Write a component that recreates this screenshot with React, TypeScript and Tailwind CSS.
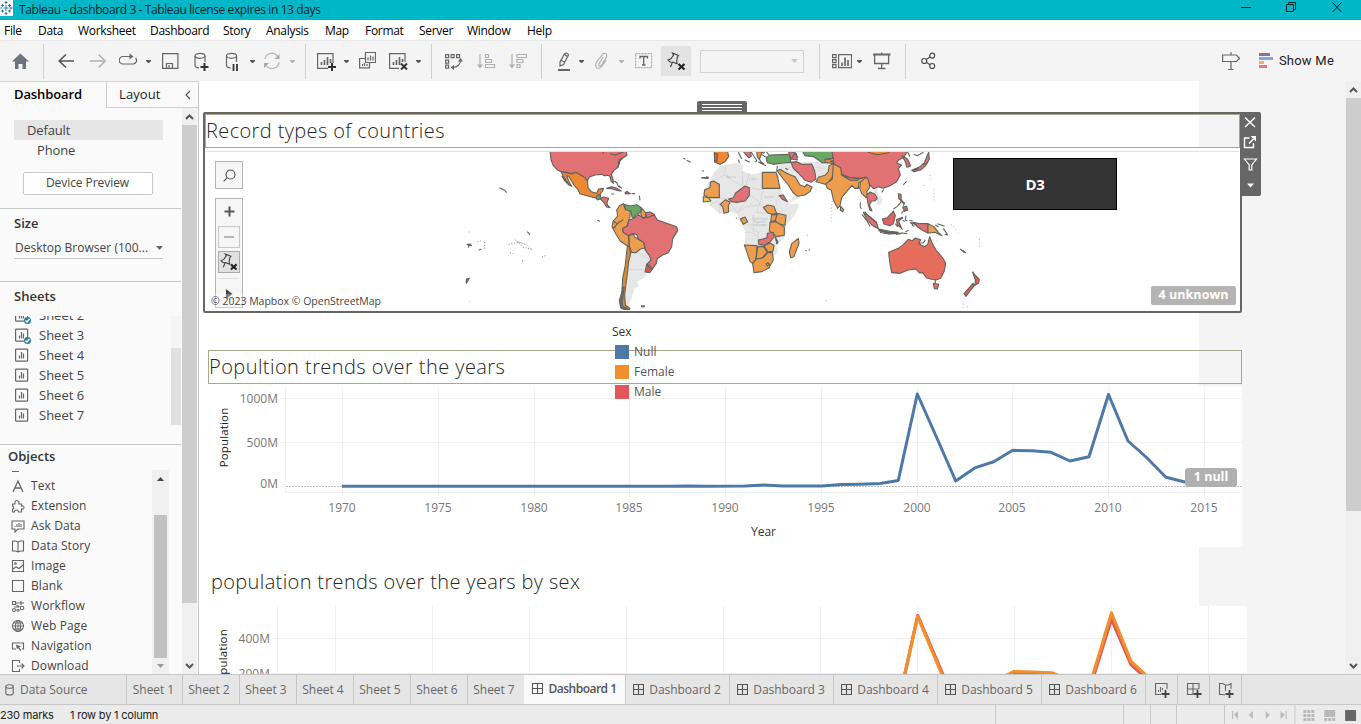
import React from "react";

const SANS = "font-['Open_Sans','Noto_Sans',sans-serif]";

function Caret({ className = "", light = false }: { className?: string; light?: boolean }) {
  return (
    <svg className={`h-5 w-[5px] shrink-0 ${className}`} viewBox="0 0 5 20">
      <path d="M0 9h5v1l-2 2H2L0 10z" fill={light ? "#b4b4b4" : "#5c5c5c"} />
    </svg>
  );
}

function Sep({ className = "" }: { className?: string }) {
  return <div className={`h-[35px] w-px shrink-0 bg-[#cfcfcf] ${className}`} />;
}

function Ico({ className, box, children }: { className: string; box: string; children: React.ReactNode }) {
  return (
    <svg className={`h-5 shrink-0 ${className}`} viewBox={box} fill="none" stroke="#666" strokeWidth="1.2">
      {children}
    </svg>
  );
}

function Pin({ className }: { className: string }) {
  return (
    <svg className={`shrink-0 ${className}`} viewBox="0 0 19 19" fill="none" stroke="#3c3c3c" strokeWidth="1.1">
      <path d="M5.500 1l6 2.500-1 1.200-.800 4 .300 3-3.800-1.500L3 10 1 8l3-1.200L6.500 3z" />
      <path d="M5.500 10L3.500 15" />
      <path d="M11.500 12l6 5.500M17.500 12l-6 5.500" stroke="#222" strokeWidth="2.200" />
    </svg>
  );
}

function TitleBar() {
  return (
    <header className={`flex h-5 shrink-0 items-start overflow-hidden bg-[#00b7c7] ${SANS}`}>
      <svg className="h-4 w-[13px] bg-white" viewBox="0 0 13 16" stroke="#2f78b0" fill="none">
        <path d="M6 5v6M3.500 8h5M6 1v3M4.500 2.500h3M6 12v3M4.500 13.500h3M0 8h2M11 6.500v3M9.500 8h3M2.500 4v3M1 5.500h3M9.500 4v3M8 5.500h3M2.500 9.500v3M1 11h3M9.500 9.500v3M8 11h3" />
      </svg>
      <span className="ml-[6px] mt-px text-[12px] leading-[17px] tracking-[-0.39px] text-[#08262a]">
        Tableau - dashboard 3 - Tableau license expires in 13 days
      </span>
      <svg className="ml-auto mr-[14px] h-5 w-[106px]" viewBox="0 0 106 20" fill="none" stroke="#062327">
        <path d="M0 7.500h10" />
        <path d="M45.500 4.500h7v7h-7zM47.500 4v-1.500h7v7H53" />
        <path d="M91.500 2.500l9 9.500M100.500 2.500l-9 9.500" />
      </svg>
    </header>
  );
}

function MenuBar() {
  return (
    <nav className={`flex h-5 shrink-0 items-center bg-white pl-1 pt-[2px] text-[12px] tracking-[-0.3px] text-black ${SANS}`}>
      <span className="w-[34px]">File</span>
      <span className="w-[40px]">Data</span>
      <span className="w-[72px]">Worksheet</span>
      <span className="w-[73px]">Dashboard</span>
      <span className="w-[43px]">Story</span>
      <span className="w-[59px]">Analysis</span>
      <span className="w-[40px]">Map</span>
      <span className="w-[54px]">Format</span>
      <span className="w-[48px]">Server</span>
      <span className="w-[60px]">Window</span>
      <span>Help</span>
    </nav>
  );
}

function Toolbar() {
  return (
    <div className="flex h-[41px] shrink-0 items-center border-t border-[#e9e9e9] bg-[#f4f4f4]">
      <Ico className="ml-[12px] w-[17px]" box="0 0 17 20">
        <path d="M8.300 2.500L17 10.500h-3v7.500h-3.500v-5h-4v5H3v-7.500H0z" fill="#6b7280" stroke="none" />
      </Ico>
      <Sep className="ml-[14px]" />
      <Ico className="ml-[14px] w-[17px]" box="0 0 17 20">
        <path d="M16 10H1M8 3.500L1.200 10 8 16.500" strokeWidth="1.600" stroke="#555" />
      </Ico>
      <Ico className="ml-[15px] w-[17px]" box="0 0 17 20">
        <path d="M0 10h15M8.500 3.500L15.200 10l-6.700 6.500" strokeWidth="1.500" stroke="#b0b0b0" />
      </Ico>
      <Ico className="ml-[12px] w-[19px]" box="0 0 19 20">
        <path d="M12 5.500H4a3.500 3.500 0 0 0 0 7.500h10a3.500 3.500 0 0 0 2.500-6" />
        <path d="M10.500 2.500l4 3-4 3z" fill="#666" stroke="none" />
      </Ico>
      <Caret className="ml-[8px]" />
      <Ico className="ml-[11px] w-[17px]" box="0 0 17 20">
        <path d="M.600 2.600h15.300v14.800H.600zM4.500 17v-4.500h6V17M7 14v3" />
      </Ico>
      <Ico className="ml-[15px] w-[16px]" box="0 0 16 20">
        <ellipse cx="6" cy="4.800" rx="5" ry="2.500" />
        <path d="M1 5v9.500q0 2 4 2.500M11 5v6" />
        <path d="M10.500 12v8M6.500 16h8" stroke="#333" strokeWidth="2" />
      </Ico>
      <Ico className="ml-[15px] w-[15px]" box="0 0 15 20">
        <ellipse cx="6.500" cy="4.800" rx="5" ry="2.500" />
        <path d="M1.500 5v9.500q0 2 4 2.500M11.500 5v6" />
        <path d="M8.500 13v7M12 13v7" stroke="#333" strokeWidth="1.800" />
      </Ico>
      <Caret className="ml-[10px]" />
      <Ico className="ml-[8px] w-[18px]" box="0 0 18 20">
        <path d="M2 8a7 7 0 0 1 13-2M16 11a7 7 0 0 1-13 3" stroke="#b4b4b4" />
        <path d="M16.500 3v5h-5zM1 17v-5h5z" fill="#a9a9a9" stroke="none" />
      </Ico>
      <Caret className="ml-[9px]" light />
      <Sep className="ml-[10px]" />
      <Ico className="ml-[11px] w-[19px]" box="0 0 19 20">
        <path d="M16 12V2.600H.600v14.800H11" />
        <path d="M4.500 14v-3M7.500 14V9M10.500 14V6M13.500 12V8" strokeWidth="1.700" />
        <path d="M15 12v8M11 16h8" stroke="#333" strokeWidth="2" />
      </Ico>
      <Caret className="ml-[8px]" />
      <Ico className="ml-[10px] w-[17px]" box="0 0 17 20">
        <path d="M6.500 1.500h10v10h-10zM6 7.500H.600v9.300h9.900V12M9 9.500v-3M11.500 9.500v-5M14 9.500v-4M3.500 15v-2M5.500 15v-3M8 15v-2" />
      </Ico>
      <Ico className="ml-[13px] w-[19px]" box="0 0 19 20">
        <path d="M16 11V2.600H.600v14.800H10" />
        <path d="M4.500 14v-3M7.500 14V9M10.500 14V6M13.500 11V8" strokeWidth="1.700" />
        <path d="M12 12.500l6 6M18 12.500l-6 6" stroke="#333" strokeWidth="1.900" />
      </Ico>
      <Caret className="ml-[8px]" />
      <Sep className="ml-[10px]" />
      <Ico className="ml-[13px] w-[18px]" box="0 0 18 20">
        <path d="M.600 3.600h3v3h-3zM6.100 3.600h3v3h-3zM11.600 3.600h3v3h-3zM.600 9.100h3v3h-3zM.600 14.100h3v3h-3zM15.500 9q0 7-8.500 7.500" />
        <path d="M15.500 7l2.500 3.500h-5zM5.500 16.500l3.500-2.500v5z" fill="#666" stroke="none" />
      </Ico>
      <Ico className="ml-[14px] w-[19px]" box="0 0 19 20">
        <path d="M3 3v12M8.500 3.500h3v3h-3zM8.500 8.500h6v3h-6zM8.500 13.500h9v3h-9z" stroke="#b0b0b0" />
        <path d="M0 13.500h6l-3 4z" fill="#b0b0b0" stroke="none" />
      </Ico>
      <Ico className="ml-[13px] w-[19px]" box="0 0 19 20">
        <path d="M3 3v12M8 3.500h9.500v3H8zM8 8.500h6v3H8zM8 13.500h3v3H8z" stroke="#b0b0b0" />
        <path d="M0 13.500h6l-3 4z" fill="#b0b0b0" stroke="none" />
      </Ico>
      <Sep className="ml-[13px]" />
      <Ico className="ml-[15px] w-[15px]" box="0 0 15 20">
        <path d="M7.500 3q3-2 4 1l-5 9.500-3.500 1.500v-4zM4.500 9.500L8 11.500M7.500 3.500l3 2" />
        <path d="M1 19h12" strokeWidth="2" />
      </Ico>
      <Caret className="ml-[7px]" />
      <Ico className="ml-[11px] w-[14px]" box="0 0 14 20">
        <path d="M8 6l-4 7q-.500 3 2 2l5-8q2-4-1-4.500-2-.500-3 1.500L1.500 11q-2 4 .500 6 3 1 5-2l4-6" stroke="#b0b0b0" />
      </Ico>
      <Caret className="ml-[10px]" light />
      <Ico className="ml-[11px] w-[18px]" box="0 0 18 20">
        <path d="M.600 2.600h16v14h-16z" stroke="#aaa" strokeDasharray="2 1" />
        <path d="M5 7.500V5.500h7.500v2M8.700 5.500v8.500M7 14h3.500" strokeWidth="1.300" />
      </Ico>
      <div className="ml-[8px] flex h-[30px] w-[30px] items-center justify-center bg-[#e3e3e3]">
        <Pin className="h-[19px] w-[19px]" />
      </div>
      <div className="ml-[9px] flex h-[23px] w-[104px] items-center justify-end rounded-[1px] border border-[#d2d2d2] pr-[5px]">
        <svg className="h-[5px] w-[7px]" viewBox="0 0 7 5"><path d="M0 0h7L3.500 4z" fill="#c8c8c8" /></svg>
      </div>
      <Sep className="ml-[15px]" />
      <Ico className="ml-[12px] w-[20px]" box="0 0 20 20">
        <path d="M.600 3.600h3.500v3H.600zM.600 8.600h3.500v3H.600zM.600 13.600h3.500v3H.600zM6.600 3.600h12.900v13H6.600z" />
        <path d="M10 15v-3.500M13 15V6.500M16 15V9" strokeWidth="1.700" />
      </Ico>
      <Caret className="ml-[5px]" />
      <Ico className="ml-[11px] w-[18px]" box="0 0 18 20">
        <path d="M0 3.500h17.500" strokeWidth="2" />
        <path d="M1.600 4v8.500h14V4M8.700 12.500V17M5 17.500h7.500M8.700 1.500V3" strokeWidth="1.300" />
      </Ico>
      <Sep className="ml-[14px]" />
      <Ico className="ml-[15px] w-[15px]" box="0 0 15 20">
        <g stroke="#4a4a4a">
          <circle cx="3.200" cy="10" r="2.500" /><circle cx="11.200" cy="4.600" r="2.500" /><circle cx="11.200" cy="15" r="2.500" />
          <path d="M5.300 8.500L9 6M5.300 11.300L9 13.700" />
        </g>
      </Ico>
      <Ico className="ml-auto w-[18px]" box="0 0 18 20">
        <path d="M9 1v3M.600 4H14.500l3 3.300-3 3.200H.600zM9 10.500V19M6 18.500h5.500" />
      </Ico>
      <svg className="ml-[19px] h-5 w-[14px] shrink-0" viewBox="0 0 14 20">
        <path d="M0 2h11v3H0z" fill="#8a6f9c" /><path d="M0 6h14v3H0z" fill="#81a8d0" />
        <path d="M0 10h5v3H0z" fill="#f6ac7f" /><path d="M0 14h8v3H0z" fill="#fd6f80" />
      </svg>
      <span className="ml-[6px] mr-[27px] whitespace-nowrap font-[Roboto,sans-serif] text-[13px] tracking-[0.22px] text-[#222]">Show Me</span>
    </div>
  );
}

function SheetRow({ name, used = false }: { name: string; used?: boolean }) {
  return (
    <div className="flex h-5 shrink-0 items-center">
      <svg className="h-4 w-[18px]" viewBox="0 0 18 16" fill="none" stroke="#666" strokeWidth="1.200">
        <rect x=".600" y="1.100" width="12" height="12" rx=".500" />
        <path d="M4.500 10.500V7.500M6.500 10.500V4M8.500 10.500V5.500" />
        {used && <><circle cx="12.500" cy="12.500" r="3.500" fill="#347c9e" stroke="none" /><path d="M10.500 12.500l1.500 1.500 2.500-3" stroke="#fff" /></>}
      </svg>
      <span className="ml-[6px]">{name}</span>
    </div>
  );
}

const objects: { name: string; icon: React.ReactNode }[] = [
  { name: "Text", icon: <path d="M2 13L7 2l5 11M3.800 9h6.400" strokeWidth="1.300" /> },
  { name: "Extension", icon: <path d="M4 5V3q1-3 4 0v2h2.500v2q2.500-.500 2.500 1.500t-2.500 1.500v3H7.500q0-2-2-2t-2 2H1.500v-3q2.500-.500 0-3V5z" /> },
  { name: "Ask Data", icon: <><path d="M1 2h12v8H7l-3 3v-3H1z" /><path d="M4 8V7M6 8V5M8 8V4M10 8V5" strokeWidth="1.600" stroke="#999" /></> },
  { name: "Data Story", icon: <path d="M7 3L4.500 2H1.500v10h3L7 13l2.500-1h3V2h-3L7 3v10" /> },
  { name: "Image", icon: <><path d="M1.500 1.500h11v11h-11zM2 10l3-2 3 1.500L12 6" /><circle cx="4.500" cy="4.500" r=".800" /></> },
  { name: "Blank", icon: <path d="M1.500 1.500h11v11h-11z" /> },
  { name: "Workflow", icon: <><path d="M1.500 2.500h3v3h-3zM4.500 4H13M10 2v4M3 8h5M5.500 6l3 2M5 11h4" /><circle cx="3" cy="11" r="1.500" /><circle cx="11" cy="9" r="1.800" /><path d="M7 10v3" /></> },
  { name: "Web Page", icon: <><circle cx="7" cy="7" r="5.500" /><ellipse cx="7" cy="7" rx="2.500" ry="5.500" /><path d="M1.500 7h11M2.500 4h9M2.500 10h9M7 1.500v11" strokeWidth=".900" /></> },
  { name: "Navigation", icon: <><path d="M5 10H1.500V4h11v6H11" /><path d="M5 5.500l5 2-2 .800 2.500 3-1 .700-2.500-3-1 1.500z" fill="#666" stroke="none" /></> },
  { name: "Download", icon: <path d="M8.500 4V1.500h-7v11h7V10M6 7h7M10.500 4.500L13 7l-2.500 2.500" /> },
];

function Sidebar() {
  return (
    <aside className={`flex w-[199px] shrink-0 flex-col border-r border-[#c8c8c8] bg-[#fafafa] text-[13px] text-[#444] ${SANS}`}>
      <div className="flex h-[27px] shrink-0 border-t border-[#d2d2d2]">
        <div className="w-[106px] pl-[14px] text-[13px] font-semibold leading-[25px] tracking-[-0.1px] text-black">Dashboard</div>
        <div className="flex flex-1 items-center border-b border-l border-[#cfcfcf] pl-[12px] text-[13px] tracking-[0.1px] text-[#222]">
          Layout
          <svg className="ml-auto mr-[7px] h-[10px] w-[6px]" viewBox="0 0 6 10" fill="none" stroke="#555" strokeWidth="1.200"><path d="M5 1L1 5l4 4" /></svg>
        </div>
      </div>
      <div className="flex min-h-0 flex-1">
        <div className="flex w-[181px] shrink-0 flex-col overflow-hidden">
          <div className="ml-[14px] mt-[12px] h-5 w-[149px] shrink-0 bg-[#e6e6e6] pl-[13px] leading-5 tracking-[-0.15px]">Default</div>
          <div className="ml-[37px] h-5 shrink-0 leading-5 tracking-[-0.15px]">Phone</div>
          <div className="ml-[23px] mt-[12px] h-[23px] w-[130px] shrink-0 rounded-[2px] border border-[#c8c8c8] bg-white pr-px text-center text-[12px] leading-[20px] tracking-[-0.06px]">Device Preview</div>
          <div className="mt-[13px] h-[73px] shrink-0 border-t border-[#c8c8c8] pl-[14px] pt-[5px]">
            <div className="text-[13px] font-semibold leading-[18px] text-[#333]">Size</div>
            <div className="mt-[5px] flex h-[22px] w-[149px] items-center border-b border-[#c8c8c8] pl-px text-[12px] tracking-[0.02px]">
              Desktop Browser (100...
              <svg className="ml-auto h-[4px] w-[7px]" viewBox="0 0 7 4"><path d="M0 0h7L3.500 4z" fill="#666" /></svg>
            </div>
          </div>
          <div className="h-[163px] shrink-0 border-t border-[#c8c8c8]">
            <div className="pl-[14px] pt-[4px] text-[13px] font-semibold leading-[20px] text-[#333]">Sheets</div>
            <div className="mt-[10px] flex h-[109px] overflow-hidden">
              <div className="-mt-[10px] flex flex-1 flex-col pl-[15px]">
                <SheetRow name="Sheet 2" used />
                <SheetRow name="Sheet 3" used />
                <SheetRow name="Sheet 4" />
                <SheetRow name="Sheet 5" />
                <SheetRow name="Sheet 6" />
                <SheetRow name="Sheet 7" />
              </div>
              <div className="w-[10px] bg-[#f5f5f5] pt-[32px]"><div className="h-[77px] bg-[#e1e1e1]" /></div>
            </div>
          </div>
          <div className="flex min-h-0 flex-1 flex-col border-t border-[#c8c8c8]">
            <div className="h-[25px] shrink-0 pl-[8px] pt-px text-[13px] font-semibold leading-[20px] text-[#333]">Objects</div>
            <div className="flex min-h-0 flex-1">
              <div className="flex w-[152px] flex-col overflow-hidden pl-[11px]">
                <div className="mb-[4px] ml-px h-[2px] w-[7px] shrink-0 border-b border-[#666]" />
                {objects.map((o) => (
                  <div key={o.name} className="flex h-5 shrink-0 items-center text-[12px] tracking-[0.1px]">
                    <svg className="h-[14px] w-[14px]" viewBox="0 0 14 14" fill="none" stroke="#666" strokeWidth="1.100">{o.icon}</svg>
                    <span className="ml-[6px] whitespace-nowrap">{o.name}</span>
                  </div>
                ))}
              </div>
              <div className="flex w-[17px] flex-col items-center bg-[#f0f0f0]">
                <svg className="mt-[7px] h-[4px] w-[7px]" viewBox="0 0 7 4"><path d="M0 4h7L3.500 0z" fill="#444" /></svg>
                <div className="mt-[34px] h-[143px] w-[13px] bg-[#c1c1c1]" />
                <svg className="mt-[6px] h-[4px] w-[7px]" viewBox="0 0 7 4"><path d="M0 0h7L3.500 4z" fill="#999" /></svg>
              </div>
            </div>
          </div>
        </div>
        <div className="ml-px flex w-[15px] flex-col items-center bg-[#f0f0f0]">
          <svg className="mt-[6px] h-[6px] w-[9px] shrink-0" viewBox="0 0 9 6" fill="none" stroke="#555" strokeWidth="2"><path d="M1 5l3.500-3.500L8 5" /></svg>
          <div className="mt-[5px] h-[478px] w-full shrink-0 bg-[#cdcdcd]" />
          <svg className="mt-[60px] h-[6px] w-[9px] shrink-0" viewBox="0 0 9 6" fill="none" stroke="#555" strokeWidth="2"><path d="M1 1l3.500 3.500L8 1" /></svg>
        </div>
      </div>
    </aside>
  );
}

const RED = "#e27173";
const ORANGE = "#ee9d4d";
const DEEP = "#ee8833";
const GREEN = "#69a864";
const LAND = "#e7e7e7";
const YELLOW = "#ecc653";

const americas: [string, string][] = [
  [RED, "M300 15L303 45 310 62 322 75 335 80 350 82 365 86 378 82 395 92 404 98 412 108 418 96 435 90 455 88 463 92 472 91 480 94 483 108 490 115 489 102 484 88 492 76 505 66 508 50 520 38 531 31 528 15z"],
  [DEEP, "M333 80L350 84 365 87 378 82 395 92 404 98 413 109 414 128 424 140 440 145 446 132 461 130 456 141 448 150 438 158 428 157 410 152 390 146 384 134 372 120 356 94 350 92 358 112 365 124 356 119 340 93z"],
  [GREEN, "M438 158L443 150 452 149 450 162 442 165z"],
  [RED, "M450 161L460 156 476 160 471 172 472 180 480 188 470 186 462 173z"],
  [RED, "M470 130L484 125 497 128 514 138 500 136 485 131z"],
  [RED, "M525 144L530 139 541 146 528 147z"],
  [ORANGE, "M520 176L509 182 500 195 503 213 490 228 486 245 498 268 511 289 532 302 538 305 535 272 520 262 518 252 530 244 540 217 541 198 525 190z"],
  [GREEN, "M522 178L540 183 560 179 575 189 570 203 557 208 553 220 546 216 543 199 527 194z"],
  [ORANGE, "M575 190L587 203 586 217 578 218 572 206z"],
  [RED, "M587 203L600 201 612 208 606 216 590 218z"],
  [RED, "M552 220L565 208 580 220 600 216 612 208 622 225 650 235 680 245 683 257 668 281 665 305 655 323 638 330 622 341 619 355 606 374 600 362 590 358 603 345 598 332 585 314 583 295 565 282 560 268 545 266 535 272 520 262 518 250 532 243 536 226z"],
  [ORANGE, "M537 272L550 268 554 276 580 292 585 309 571 312 558 323 545 322 538 303z"],
  ["#d5554f", "M590 358L606 373 599 383 585 381z"],
  ["#dc8a32", "M532 303L538 305 542 326 536 350 533 378 529 410 524 450 526 480 540 490 538 494 523 494 512 488 508 466 516 440 518 400 526 360z"],
  ["#e05a44", "M49 402L58 400 49 415z"],
];

const oldWorld: [string, string][] = [
  [DEEP, "M73 15L74 51 90 58 105 50 116 35 112 15z"],
  ["#de604f", "M73 24L82 27 81 50 74 51z"],
  [RED, "M160 20L180 18 184 34 176 38z"],
  [RED, "M200 15L226 15 222 24 208 22z"],
  [DEEP, "M200 18L216 22 208 44 202 36z"],
  [GREEN, "M228 38L240 30 300 28 302 52 278 54 250 58 232 53z"],
  [RED, "M295 18L318 25 322 45 303 42z"],
  [ORANGE, "M262 78L270 73 290 85 315 95 330 120 345 125 350 118 366 126 360 140 345 150 322 154 308 141 295 120 275 96z"],
  [ORANGE, "M217 82L258 82 263 96 270 130 217 130z"],
  [RED, "M303 52L320 50 335 58 365 57 374 78 378 102 363 112 345 106 325 84 310 70z"],
  [GREEN, "M335 15L430 15 428 40 410 42 415 52 398 54 370 35 345 32z"],
  [DEEP, "M405 42L428 45 431 56 405 52z"],
  [RED, "M425 15L654 15 642 36 625 46 620 53 635 61 625 70 631 90 620 110 600 122 580 130 565 125 550 131 540 120 530 98 510 100 480 98 455 88 450 70 432 56 430 40z"],
  [DEEP, "M520 15L600 15 596 23 563 29 545 25z"],
  [ORANGE, "M378 110L386 96 405 91 415 80 417 62 430 56 441 70 424 100 410 119 385 112z"],
  [ORANGE, "M430 56L452 68 455 90 480 105 510 101 528 96 533 100 523 114 507 111 505 130 494 130 486 121 470 140 455 158 450 182 443 190 430 165 424 136 412 130 407 117 427 102z"],
  [RED, "M455 89L482 98 508 101 502 106 480 105z"],
  [ORANGE, "M452 184L461 194 458 200 451 196z"],
  [ORANGE, "M511 112L527 97 534 102 540 126 530 140 535 154 528 158 515 145 509 130z"],
  [RED, "M530 150L541 141 555 148 562 160 554 168 545 168 538 180 546 198 540 196 534 176z"],
  [RED, "M636 32L653 43 662 62 651 67 646 50z"],
  [RED, "M665 76L690 65 703 53 710 36 716 22 718 43 707 62 694 74 672 80z"],
  [RED, "M520 202L540 215 560 234 565 251 545 240 530 222z"],
  [RED, "M565 252L600 259 625 262 600 264 574 258z"],
  ["#e06068", "M577 222L592 218 610 198 616 212 610 236 600 242 582 237z"],
  [RED, "M619 224L638 217 626 229 634 248 622 240z"],
  [RED, "M625 146L633 148 634 168 626 160z"],
  [RED, "M638 186L650 184 653 196 644 199z"],
  [RED, "M670 232L690 236 714 236 714 264 700 257 684 247z"],
  [ORANGE, "M714 236L732 245 745 262 756 272 735 262 714 264z"],
  ["#e66d5b", "M596 322L625 310 640 299 655 283 667 287 676 279 692 284 686 296 704 305 713 298 719 275 726 293 738 315 759 340 767 355 763 378 752 400 738 405 721 402 709 398 698 383 688 384 678 372 655 375 630 385 605 383 599 350z"],
  [RED, "M730 415L746 418 742 432 733 431z"],
  ["#e05c52", "M848 382L858 393 868 403 866 414 855 421 856 405z"],
  ["#e05c52", "M849 415L854 421 840 438 828 454 822 446 834 432z"],
  [ORANGE, "M325 280L327 295 312 335 302 338 298 321 305 296z"],
  [ORANGE, "M44 134L60 128 61 112 70 108 88 118 88 158 55 158 42 150z"],
  [YELLOW, "M40 155L55 158 63 168 40 171z"],
  [RED, "M116 162L130 158 137 144 165 123 178 128 178 152 165 168 140 172 124 170z"],
  [ORANGE, "M90 178L107 164 120 172 115 182 116 201 102 205 98 185z"],
  [ORANGE, "M151 222L165 216 173 230 160 238z"],
  [ORANGE, "M220 187L234 180 252 184 260 206 245 208 232 203z"],
  [RED, "M268 152L280 150 292 170 276 162z"],
  [ORANGE, "M262 205L288 211 285 241 262 236 255 224z"],
  [ORANGE, "M245 209L261 208 256 226 242 230z"],
  [ORANGE, "M240 232L258 230 283 246 283 271 260 275 238 258z"],
  [RED, "M205 285L218 282 231 278 232 265 250 262 252 276 241 290 225 300 206 298z"],
  [YELLOW, "M255 275L264 290 261 297z"],
  [ORANGE, "M163 300L201 302 198 345 188 355 180 349 172 325z"],
  [ORANGE, "M203 305L220 304 232 322 215 340 198 343z"],
  [ORANGE, "M222 302L240 294 252 301 249 319 234 321z"],
  [ORANGE, "M188 355L198 343 220 338 234 322 247 323 250 345 236 370 215 380 192 383z"],
];

function WorldMap() {
  return (
    <svg className="h-[158px] w-[1034px]" viewBox="206 152 1034 158">
      <g transform="translate(450 145) scale(.33333)" stroke="#62625c" strokeWidth="3.300" strokeLinejoin="round">
        <path stroke="none" fill={LAND} d="M540 322L560 323 572 312 585 316 603 344 588 360 584 380 590 392 562 410 565 425 552 432 545 460 534 490 522 488 530 420 533 370z" />
        <path stroke="#c9c9c9" strokeWidth="1.500" fill="none" d="M538 374h44M560 323l40 20" />
        {americas.map(([fill, d]) => <path key={d} fill={fill} d={d} />)}
        <path fill="none" d="M488 228l14 8 18-12M497 246l-8 4 20-20M503 55l14-18M458 15l2 12M480 26l15 4 25-9M493 108l8 6 4 10 10 6-8-8M508 42v14l-6 10M545 146h10M568 152l2 14M484 147h8M700 40l6 3M710 46l12 6M756 77l6 2M754 98l18 2M800 15l-6 14v20M148 128l8 4 8 4 6 7M232 260l8 10M442 226l8 3M573 484h12M50 298l16 4M56 300v8M86 316l8-4" />
        <path fill="none" strokeWidth="5" d="M573 484h12M52 299h12M336 92l8 14 14 14" />
        <path fill="none" strokeWidth="8" stroke="#666" d="M520 425l-2 24-4 24 2 14 18 6" />
        <path fill="none" strokeWidth="3" stroke="#888" strokeDasharray="3 5" d="M176 298l30-6 26 8 16 16M196 284l22 22 30 8M204 290l16 6M180 324l14 2M104 292v22M82 290l10-2M216 348h3M276 336l12-5M58 260v2M58 470v2" />
      </g>
      <g transform="translate(690 145) scale(.33333)" stroke="#62625c" strokeWidth="3.300" strokeLinejoin="round">
        <path stroke="none" fill={LAND} d="M56 112L75 78 92 62 150 52 160 64 157 78 185 88 215 82 265 86 270 130 285 155 300 178 328 176 318 205 290 240 285 275 260 300 263 320 248 340 230 370 200 384 185 360 175 330 163 300 166 262 150 230 140 205 116 200 90 206 64 185 42 165 40 150 44 130z" />
        <path stroke="none" fill={LAND} d="M265 58L303 52 330 52 415 50 417 70 404 92 382 98 372 80 335 88 330 105 310 110 300 90 272 80z" />
        <path stroke="none" fill={LAND} d="M550 131L562 128 563 145 578 165 570 182 560 178 562 160z" />
        <path stroke="none" fill={LAND} d="M293 178L310 154 330 150 322 160z" />
        <path stroke="#cdcdcd" strokeWidth="1.800" fill="none" d="M70 106L104 90 108 60M104 90l50 34M158 78v44l60 14M178 86l-10 36M218 130l-8 50M180 150l30 22-10 30 20 4M88 158l28 4M90 206l0-28M120 172l20 30 30-34M140 205l30-20 40-5M166 262h18l20 12M190 210v50M210 180l25 25M172 240h60M248 340l-2 -20M62 180l18-12 12 10M260 275l-28 0M270 132l-12 50M60 112h12M205 285v-22l-30-20M290 75l20-16M345 60l60 12" />
        {oldWorld.map(([fill, d]) => <path key={d} fill={fill} d={d} />)}
        <path fill="none" d="M145 22l10 20M164 44l16 8M183 20l10 16 8 12-6 2M146 44l2 10M208 42l8 14 12 6M215 28l12 8M205 50l10 6M262 62l-2 18M286 70l8 4M228 18l8 12M302 44l14 -20 8 14M35 98h20M50 94l4 8M610 192l12-8 12-14M632 168l12 6-4 8M512 172q-4 12 2 20M570 262l20 4 34 0 10-2 18 2M646 260l10-4M630 246l8 8M648 212l-2 14 6 2M660 232l10 8M742 236l22 8M736 240l10 6M760 250l12 18M764 268l10 2M810 312l18 12M848 380l4 6M686 294l14 0 6-10M736 414v-12M228 357l6-4 4 6-6 4zM346 316l4 2M356 316l4-2M138 218l2 2M420 48l10 4M516 208l14 18 10 18M575 142l6 -8M640 120l10-12M680 240l-16-8M634 205l14-14M712 55l-14 4M700 22l-18 10-10-4M650 15l10 20M524 200l18 20 18 12M566 256l24 6 30 2M624 222l14-2M616 236l6 8 8-4M638 226l6 4M658 226l10 2M666 240l8 4M594 268l12-2M618 268l14-2" />
        <path fill="none" strokeWidth="5" d="M634 166l8 10M566 256l30 8M818 316l6 6M670 76l16-6M212 52l10 6M50 98h6" />
        <path fill="none" strokeWidth="2.500" stroke="#999" strokeDasharray="3 7" d="M427 168q-6 30-2 64M720 90l4 20M732 134v32M784 238l20 24M868 282v28M352 270v6M820 476v12M832 484l2 6M406 467h4M700 120v4" />
      </g>
      <g className="font-['Open_Sans',sans-serif]" fontSize="3" fill="#bdbdbd" textAnchor="middle">
        <text x="731" y="178">Algeria</text><text x="753" y="180">Libya</text><text x="769" y="198">Sudan</text>
        <text x="760" y="220">Democratic</text><text x="760" y="223">Republic</text><text x="760" y="226">of Congo</text>
      </g>
    </svg>
  );
}

function MapZone() {
  return (
    <section className="relative ml-[4px] mt-[31px] h-[201px] w-[1039px] rounded-[2px] border-[2px] border-[#666]">
      <h2 className="h-[34px] border border-[#aaa78f] text-[20px] font-light leading-[31px] tracking-[0.38px] text-[#262626]">Record types of countries</h2>
      <div className="h-[163px] bg-white pt-[3px]">
        <div className="mx-px h-[159px] overflow-hidden border-t border-[#e2e2e2]">
          <WorldMap />
        </div>
      </div>
      <div className="absolute -top-[13px] left-[492px] flex h-[12px] w-[50px] flex-col items-center justify-center gap-[2px] rounded-t-[2px] bg-[#666]">
        <div className="h-px w-[40px] bg-white" />
        <div className="h-px w-[40px] bg-white" />
        <div className="h-px w-[40px] bg-white" />
      </div>
      <div className="absolute -top-[2px] left-[1035px] h-[84px] w-[21px] rounded-r-[2px] bg-[#666]">
        <svg className="h-[84px] w-[21px]" viewBox="0 0 21 84" fill="none" stroke="#fff" strokeWidth="1.400">
          <path d="M5 5.500l10 9.500M15 5.500L5 15" />
          <path d="M9.500 26H4.500v9.500h9V31M9 31.500l5-5" /><path d="M10.500 24h5.500v5.500z" fill="#fff" stroke="none" />
          <path d="M4.500 47h12l-4.700 6v5h-2.600v-5z" strokeWidth="1.200" />
          <path d="M7 71.500h7L10.500 75.500z" fill="#fff" stroke="none" />
        </svg>
      </div>
      <div className="absolute left-[10px] top-[47px] flex h-[28px] w-[28px] items-center justify-center border border-[#b4b4b4] bg-[#f6f6f6]">
        <svg className="h-[13px] w-[13px]" viewBox="0 0 13 13" fill="none" stroke="#555" strokeWidth="1.200"><circle cx="7.500" cy="5.500" r="4.500" /><path d="M4.300 8.700L.700 12.300" /></svg>
      </div>
      <div className="absolute left-[10px] top-[84px] flex h-[110px] w-[28px] flex-col items-center border border-[#b4b4b4] bg-[#f6f6f6]">
        <svg className="mt-[7px] h-[11px] w-[11px] shrink-0" viewBox="0 0 11 11"><path d="M.500 5.500h10M5.500.500v10" stroke="#555" strokeWidth="2" /></svg>
        <div className="mt-[9px] flex h-[22px] w-[22px] items-center justify-center border border-[#c8c8c8]"><div className="h-[2px] w-[10px] bg-[#b4b4b4]" /></div>
        <div className="mt-[3px] flex h-[22px] w-[22px] items-center justify-center border border-[#aaa] bg-[#e1e1e1]"><Pin className="h-[18px] w-[18px]" /></div>
        <div className="mt-[5px] h-px w-[20px] bg-[#ddd]" />
        <svg className="ml-[1px] mt-[10px] h-[10px] w-[7px]" viewBox="0 0 7 10"><path d="M0 0l6.500 5L0 10z" fill="#444" /></svg>
      </div>
      <div className="absolute left-[3px] top-[180px] h-[14px] whitespace-nowrap bg-white/30 px-[2px] pl-[3px] text-[10.500px] font-medium leading-[14px] tracking-[-0.01px] text-[#444]">© 2023 Mapbox © OpenStreetMap</div>
      <div className="absolute left-[748px] top-[44px] flex h-[52px] w-[164px] items-center justify-center border border-black bg-[#333] text-[15px] font-bold tracking-[-0.3px] text-white">D3</div>
      <div className="absolute left-[946px] top-[172px] flex h-[19px] w-[85px] items-center justify-center rounded-[2px] bg-[#b4b4b4] text-[12.500px] font-bold tracking-[0.05px] text-white">4 unknown</div>
    </section>
  );
}

function Legend() {
  return (
    <div className="absolute left-[411px] top-[243px] flex flex-col text-[12px] text-[#555]">
      <div className="ml-[2px] h-[18px] font-medium leading-[16px] text-[#333]">Sex</div>
      <div className="flex h-5 items-center"><i className="ml-[5px] mr-[5px] h-[14px] w-[14px] bg-[#4e79a7]" />Null</div>
      <div className="flex h-5 items-center"><i className="ml-[5px] mr-[5px] h-[14px] w-[14px] bg-[#f28e2b]" />Female</div>
      <div className="flex h-5 items-center"><i className="ml-[5px] mr-[5px] h-[14px] w-[14px] bg-[#e15759]" />Male</div>
    </div>
  );
}

const yearX = [342.5, 438.5, 534.5, 629.5, 725.5, 821.5, 917.5, 1012.5, 1108.5, 1204.5];

function TrendChart() {
  return (
    <div className="relative ml-[9px] mt-[2px] h-[161px] w-[1034px] bg-white">
      <svg className="h-[161px] w-[1034px]" viewBox="208 386 1034 161">
        <g stroke="#f0f0f0">
          {yearX.map((x) => <path key={x} d={`M${x} 387V497`} />)}
          <path d="M285.500 387V492M285 492.500H1242M281 398.500H1242M281 442.500H1242M281 486.500h5" />
        </g>
        <path d="M286 486.500H1242" stroke="#bdbdbd" strokeDasharray="2 1" />
        <path fill="none" stroke="#4e79a7" strokeWidth="3" strokeLinejoin="round" d="M342 486.300H670L688 486 706 486.300 745 486 764 485 783 486 822 486 841 484.600 860 484.200 880 483.500 898.300 480.400 917.300 394 936 436 955.700 481 974.700 467.900 993.700 461.700 1012.700 450.300 1032 450.800 1051 452.300 1070 461 1089 456.700 1108.500 394.500 1128 441 1146 457 1166 477.200 1187 482.500" />
        <g fontSize="12" fill="#787878">
          <g textAnchor="end">
            <text x="278" y="403">1000M</text><text x="278" y="447">500M</text><text x="278" y="488">0M</text>
          </g>
          <g textAnchor="middle">
            {yearX.map((x, i) => <text key={x} x={x - 0.5} y="512">{1970 + i * 5}</text>)}
          </g>
          <text x="763.500" y="536" textAnchor="middle" fill="#333" fontWeight="500">Year</text>
          <text transform="translate(228 437.500) rotate(-90)" fontSize="11.500" letterSpacing=".15" textAnchor="middle" fill="#222" fontWeight="500">Population</text>
        </g>
      </svg>
      <div className="absolute left-[977px] top-[82px] flex h-[19px] w-[52px] items-center justify-center rounded-[3px] bg-[#b0b0b0] text-[12.500px] font-bold text-white">1 null</div>
    </div>
  );
}

const yearX2 = [335.5, 432.5, 529.5, 626.5, 723.5, 820.5, 917.5, 1014.5, 1111.5, 1208.5];

function SexChart() {
  return (
    <div className="ml-[9px] h-[68px] w-[1039px] overflow-hidden bg-white">
      <svg className="h-[68px] w-[1039px]" viewBox="208 606 1039 68">
        <g stroke="#f0f0f0">
          {yearX2.map((x) => <path key={x} d={`M${x} 606V674`} />)}
          <path d="M277.500 606V674M272 638.500H1247M272 673.500H1247" />
        </g>
        <g fill="none" strokeWidth="3.200" strokeLinejoin="round">
          <path stroke="#e15759" d="M904 678L917.700 615.500 944 677M1005 677L1014.500 672.500 1054 674M1093 678L1111.500 619 1131 664.500 1146 678" />
          <path stroke="#f28e2b" d="M904 678L917.700 616.500 943 677M1003 677L1014 671.500 1033 672 1052 672.800 1062 677M1092 678L1111.500 613 1131 661.500 1149 678" />
        </g>
        <g fontSize="12" fill="#787878" textAnchor="end">
          <text x="270" y="643">400M</text><text x="270" y="678">200M</text>
          <text transform="translate(227 659) rotate(-90)" fontSize="11.500" letterSpacing=".15" textAnchor="middle" fill="#222" fontWeight="500">Population</text>
        </g>
      </svg>
    </div>
  );
}

function Workspace() {
  return (
    <main className={`flex min-w-0 flex-1 overflow-hidden bg-[#f4f4f4] ${SANS}`}>
      <div className="relative flex w-[1000px] shrink-0 flex-col bg-white">
        <MapZone />
        <h2 className="ml-[9px] mt-[37px] h-[34px] w-[1034px] shrink-0 border border-[#aaa78f] text-[20px] font-light leading-[31px] tracking-[0.44px] text-[#262626]">Popultion trends over the years</h2>
        <TrendChart />
        <h2 className="ml-[12px] mt-[20px] h-[39px] shrink-0 text-[20px] font-light leading-[30px] tracking-[0.36px] text-[#262626]">population trends over the years by sex</h2>
        <SexChart />
        <Legend />
      </div>
      <div className="relative ml-auto flex w-[16px] shrink-0 flex-col items-center bg-[#f0f0f0] pl-px">
        <svg className="mt-[6px] h-[6px] w-[9px] shrink-0" viewBox="0 0 9 6" fill="none" stroke="#555" strokeWidth="2"><path d="M1 5l3.500-3.500L8 5" /></svg>
        <div className="mt-[5px] h-[413px] w-full shrink-0 bg-[#cdcdcd]" />
        <svg className="mb-[5px] mt-auto h-[6px] w-[9px] shrink-0" viewBox="0 0 9 6" fill="none" stroke="#555" strokeWidth="2"><path d="M1 1l3.500 3.500L8 1" /></svg>
      </div>
    </main>
  );
}

function GridIcon() {
  return (
    <svg className="mr-[5px] h-[11px] w-[11px] shrink-0" viewBox="0 0 11 11" fill="none" stroke="#555" strokeWidth="1.100"><path d="M.500.500h10v10H.500zM5.500.500v10M.500 5.500h10" /></svg>
  );
}

function NewTab({ children }: { children: React.ReactNode }) {
  return (
    <div className="flex w-[32px] items-center justify-center border-r border-[#c6c6c6]">
      <svg className="h-4 w-4" viewBox="0 0 16 16" fill="none" stroke="#666" strokeWidth="1.100">
        {children}
        <path d="M11.500 8v8M7.500 12h8" stroke="#444" strokeWidth="1.800" />
      </svg>
    </div>
  );
}

function SheetTabs() {
  return (
    <div className={`flex h-[31px] shrink-0 border-y border-[#c6c6c6] bg-[#e6e6e6] text-[12px] tracking-[-0.04px] text-[#666] ${SANS}`}>
      <div className="flex w-[127px] items-center border-r border-[#c6c6c6] pl-[5px]">
        <svg className="mr-[6px] h-[12px] w-[9px]" viewBox="0 0 9 12" fill="none" stroke="#666" strokeWidth="1.100"><ellipse cx="4.500" cy="2.500" rx="3.700" ry="1.800" /><path d="M.800 2.500v6.500q0 2 3.700 2t3.700-2V2.500" /></svg>
        Data Source
      </div>
      <div className="flex w-[56px] items-center justify-center border-r border-[#c6c6c6] pr-[2px]">Sheet 1</div>
      {["Sheet 2", "Sheet 3", "Sheet 4", "Sheet 5", "Sheet 6", "Sheet 7"].map((s) => (
        <div key={s} className="flex w-[57px] items-center justify-center border-r border-[#c6c6c6] pr-[4px]">{s}</div>
      ))}
      <div className="-ml-px flex w-[102px] items-center justify-center border-r border-[#c6c6c6] bg-[#fafafa] pb-[2px] font-semibold tracking-[-0.5px] text-[#555]"><GridIcon />Dashboard 1</div>
      {["Dashboard 2", "Dashboard 3", "Dashboard 4", "Dashboard 5", "Dashboard 6"].map((s) => (
        <div key={s} className="flex w-[104px] items-center justify-center whitespace-nowrap border-r border-[#c6c6c6] pr-px"><GridIcon />{s}</div>
      ))}
      <NewTab><path d="M13 7V1.500H1.500v11H7M4.500 10V8M6.500 10V5M8.500 8V6" /></NewTab>
      <NewTab><path d="M13 7V1.500H1.500v11H7M7 1.500v11M1.500 7h11" /></NewTab>
      <NewTab><path d="M13 7V1.500L10.500 3H7.500L4.500 1.500H1.500v11h3L7 13M7.500 3v6" /></NewTab>
    </div>
  );
}

function StatusBar() {
  return (
    <footer className="flex h-[19px] shrink-0 bg-[#ebebeb] font-[Inter,sans-serif] text-[11px] leading-[20px] tracking-[-0.2px] text-[#222]">
      <span className="w-[70px]">230 marks</span>
      <span>1 row by 1 column</span>
      <div className="ml-auto w-[128px] border-l border-[#c8c8c8]" />
      <div className="w-[27px] border-l border-[#c8c8c8]" />
      <div className="w-[26px] border-l border-[#c8c8c8]" />
      <div className="w-[48px] border-l border-[#c8c8c8]" />
      <svg className="h-[19px] w-[137px] border-l border-[#c8c8c8]" viewBox="0 0 137 19">
        <path d="M7 6h1v8H7zM13 6v8l-4-4zM28 6v8l-4-4zM41 6v8l4-4zM56 6v8l4-4zM61 6h1v8h-1z" fill="#b8b8b8" />
        <path d="M70.500 0v19" stroke="#c8c8c8" />
        <path d="M79 5h3v3h-3zM83 5h3v3h-3zM87 5h3v3h-3zM79 9h3v3h-3zM83 9h3v3h-3zM87 9h3v3h-3zM79 13h3v3h-3zM83 13h3v3h-3zM87 13h3v3h-3zM100 5h11v7h-11zM100 13h3v3h-3zM104 13h3v3h-3zM108 13h3v3h-3z" fill="#b8b8b8" />
        <path d="M121 5h11v11h-11z" fill="#666" />
      </svg>
    </footer>
  );
}

export default function App() {
  return (
    <div className="flex h-[724px] w-[1361px] flex-col overflow-hidden bg-white">
      <TitleBar />
      <MenuBar />
      <Toolbar />
      <div className="flex min-h-0 flex-1">
        <Sidebar />
        <Workspace />
      </div>
      <SheetTabs />
      <StatusBar />
    </div>
  );
}
